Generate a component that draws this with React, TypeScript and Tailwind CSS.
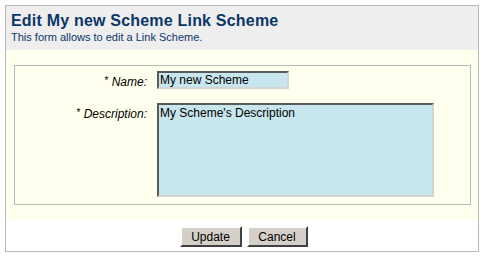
import React from 'react';

const font = { fontFamily: '"Liberation Sans", Arial, sans-serif' };

const Label = ({ text }: { text: string }) => (
  <div className="text-right text-[12px] italic text-black leading-[14px]">
    <sup className="not-italic text-[10px] relative top-[-2px]">*</sup> {text}:
  </div>
);

const App = () => {
  return (
    <div className="w-[483px] h-[256px] bg-white pt-[5px] pl-[5px]" style={font}>
      <div className="w-[474px] h-[247px] border border-[#b8b8b8] flex flex-col">
        {/* Header */}
        <div className="h-[44px] bg-[#eeeeee] pl-[5px] pt-[5px]">
          <h1 className="text-[16px] font-bold text-[#0a3668] leading-[20px] tracking-[0.2px]">
            Edit My new Scheme Link Scheme
          </h1>
          <p className="text-[11px] text-[#0a3668] leading-[13px]">
            This form allows to edit a Link Scheme.
          </p>
        </div>

        {/* Form body */}
        <div className="h-[170px] bg-[#ffffee] pt-[15px] pl-[8px] pr-[7px]">
          <div className="h-[140px] border border-[#b8b8b8] pt-[5px]">
            <div className="grid grid-cols-[132px_1fr] gap-x-[10px] gap-y-[14px]">
              <div className="pt-[4px]">
                <Label text="Name" />
              </div>
              <input
                defaultValue="My new Scheme"
                className="w-[132px] h-[18px] bg-[#c8e6ee] border-2 border-t-[#5a5a5a] border-l-[#5a5a5a] border-b-[#d4d4d4] border-r-[#d4d4d4] px-[1px] text-[12px] text-black outline-none"
                style={font}
              />
              <div className="pt-[4px]">
                <Label text="Description" />
              </div>
              <textarea
                defaultValue="My Scheme's Description"
                className="w-[277px] h-[94px] bg-[#c8e6ee] border-2 border-t-[#5a5a5a] border-l-[#5a5a5a] border-b-[#d4d4d4] border-r-[#d4d4d4] px-[1px] pt-[1px] text-[12px] leading-[14px] text-black outline-none resize-none"
                style={font}
              />
            </div>
          </div>
        </div>

        {/* Buttons */}
        <div className="flex justify-center gap-[5px] pt-[6px] pl-[3px]">
          <button className="w-[62px] h-[21px] bg-[#d4d0c8] border-2 border-t-white border-l-white border-b-[#404040] border-r-[#404040] text-[12px] text-black leading-none">
            Update
          </button>
          <button className="w-[61px] h-[21px] bg-[#d4d0c8] border-2 border-t-white border-l-white border-b-[#404040] border-r-[#404040] text-[12px] text-black leading-none">
            Cancel
          </button>
        </div>
      </div>
    </div>
  );
};

export default App;
